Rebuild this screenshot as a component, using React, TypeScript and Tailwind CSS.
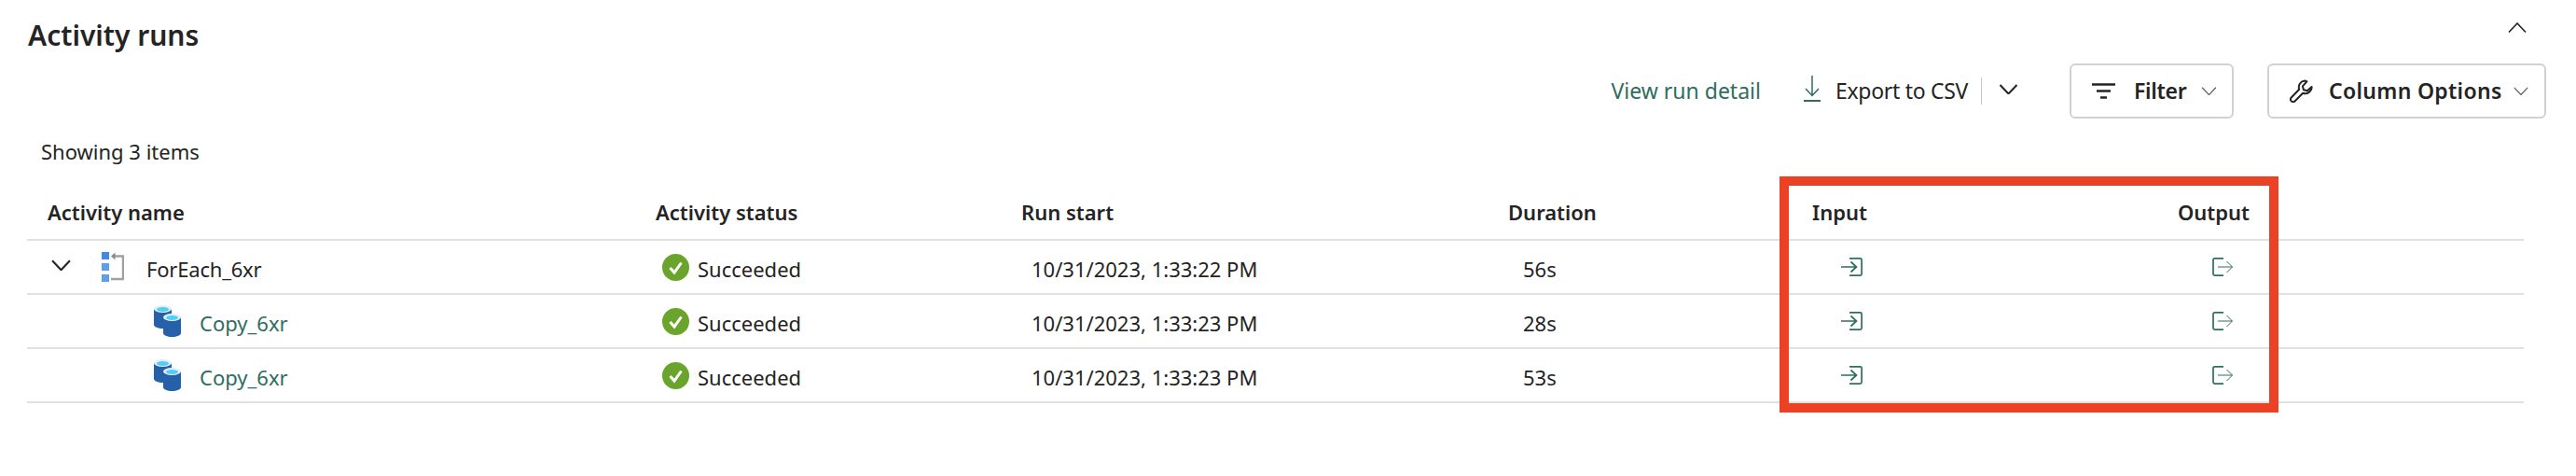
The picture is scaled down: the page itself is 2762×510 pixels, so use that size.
import React from 'react';

const rows = [
  { name: 'ForEach_6xr', start: '10/31/2023, 1:33:22 PM', duration: '56s', parent: true },
  { name: 'Copy_6xr', start: '10/31/2023, 1:33:23 PM', duration: '28s', parent: false },
  { name: 'Copy_6xr', start: '10/31/2023, 1:33:23 PM', duration: '53s', parent: false },
];

const gridCols = 'grid grid-cols-[674px_392px_522px_326px_392px_1fr]';

function Chevron({ className, up, weight = 1.6 }: { className: string; up?: boolean; weight?: number }) {
  return (
    <svg viewBox="0 0 20 11" fill="none" stroke="currentColor" strokeWidth={weight} className={className}>
      <path d={up ? 'M1 10.5 10 1l9 9.5' : 'M1 1l9 9.5L19 1'} />
    </svg>
  );
}

function CheckIcon() {
  return (
    <svg viewBox="0 0 29 29" className="w-[29px] h-[29px] shrink-0">
      <circle cx="14.5" cy="14.5" r="14.5" fill="#6ba42c" />
      <path d="M8.5 15l4.5 5 7.5-10.5" fill="none" stroke="#fff" strokeWidth="3" />
    </svg>
  );
}

function ForEachIcon() {
  return (
    <svg viewBox="0 0 24 32" className="w-[24px] h-[32px] shrink-0">
      <rect x="0" y="0" width="8" height="8" fill="#3f8ae0" />
      <rect x="0" y="12" width="8" height="8" fill="#5ea0e6" />
      <rect x="0" y="24" width="8" height="8" fill="#5ea0e6" />
      <path d="M13 4.5h10V29H10" fill="none" stroke="#a0a0a0" strokeWidth="2.4" />
      <path d="M10 4.5l4.5-4v8z" fill="#8a8a8a" />
    </svg>
  );
}

function Cylinder({ x, y }: { x: number; y: number }) {
  return (
    <g transform={`translate(${x} ${y})`}>
      <path d="M0 4v17c0 2.2 4.400 4 9.500 4s9.500-1.800 9.500-4V4z" fill="#2560a8" />
      <ellipse cx="9.500" cy="4" rx="9.500" ry="4" fill="#e6eef5" />
      <ellipse cx="9.500" cy="4.500" rx="6.500" ry="2.500" fill="#4fd0f2" />
    </g>
  );
}

function CopyIcon() {
  return (
    <svg viewBox="0 0 29 34" className="w-[29px] h-[34px] shrink-0">
      <Cylinder x={0} y={0} />
      <Cylinder x={10} y={9} />
    </svg>
  );
}

function InputIcon() {
  return (
    <svg viewBox="0 0 23 20" fill="none" stroke="#2f6d5e" className="w-[23px] h-[20px]">
      <path d="M9 .9h11.500a1.600 1.600 0 0 1 1.600 1.600v15a1.600 1.600 0 0 1-1.600 1.600H9" strokeWidth="1.700" />
      <path d="M0 10h16M10.500 4.500 16.500 10l-6 5.500" strokeWidth="1.700" />
    </svg>
  );
}

function OutputIcon() {
  return (
    <svg viewBox="0 0 22 20" fill="none" stroke="#2f6d5e" className="w-[22px] h-[20px]">
      <path d="M12 .9H2.600A1.600 1.600 0 0 0 1 2.500v15a1.600 1.600 0 0 0 1.600 1.600H12" strokeWidth="1.700" />
      <path d="M6 10h15.500M15.500 4l6 6-6 6" strokeWidth="1" />
    </svg>
  );
}

export default function App() {
  return (
    <div
      className="relative w-[2762px] h-[510px] bg-white overflow-hidden text-[#242424] text-[22px] leading-none"
      style={{ fontFamily: '"Noto Sans", "Open Sans", sans-serif' }}
    >
      {/* Title */}
      <div className="flex items-center justify-between h-[52px] mt-[12px] pl-[30px] pr-[53px]">
        <h2 className="text-[30px] font-semibold">Activity runs</h2>
        <Chevron up className="w-[20px] h-[11px] -mt-[18px]" />
      </div>

      {/* Toolbar */}
      <div className="flex items-center justify-end h-[59px] mt-[4px] pr-[32px] text-[23px]">
        <span className="text-[#2f6d5e]">View run detail</span>
        <svg viewBox="0 0 18 28" fill="none" stroke="#2f6d5e" strokeWidth="1.500" className="w-[18px] h-[28px] ml-[46px] -mt-[5px]">
          <path d="M9 0v21M2 14l7 7.500 7-7.500" />
          <path d="M0 27h18" strokeWidth="2" />
        </svg>
        <span className="ml-[16px] -tracking-[0.3px]">Export to CSV</span>
        <div className="w-px h-[29px] bg-[#c8c8c8] ml-[14px]" />
        <Chevron className="w-[21px] h-[11px] ml-[18px] -mt-[4px]" weight={2} />
        <button className="flex items-center w-[176px] h-[59px] ml-[55px] pl-[22px] border-2 border-[#d1d1d1] rounded-[6px] font-semibold">
          <svg viewBox="0 0 25 17" stroke="#242424" strokeWidth="2.400" className="w-[25px] h-[17px]">
            <path d="M0 1.500h25M5 8.500h15M9 15.500h7" />
          </svg>
          <span className="ml-[20px] -tracking-[0.3px]">Filter</span>
          <Chevron className="w-[17px] h-[9px] ml-[16px] text-[#616161]" />
        </button>
        <button className="flex items-center w-[299px] h-[59px] ml-[36px] pl-[22px] border-2 border-[#d1d1d1] rounded-[6px] font-semibold">
          <svg viewBox="0 0 25 25" fill="none" stroke="#242424" strokeWidth="2" className="w-[25px] h-[25px]">
            <path d="M16 1.500a7 7 0 0 0-5.800 9.300L1.800 19.500a2.700 2.700 0 0 0 3.900 3.800l8.500-8.500A7 7 0 0 0 23.600 8l-4.700 4.300-4-1-1-4 4.500-5a7 7 0 0 0-2.400-.800z" strokeLinejoin="round" />
          </svg>
          <span className="ml-[17px] tracking-[0.3px]">Column Options</span>
          <Chevron className="w-[16px] h-[9px] ml-[12px] text-[#616161]" />
        </button>
      </div>

      <p className="mt-[24px] pl-[44px]">Showing 3 items</p>

      {/* Table */}
      <div className="ml-[29px] w-[2677px] mt-[27px]">
        <div className={`${gridCols} items-center h-[58px] pb-[2px] border-b-2 border-[#e0e0e0] font-semibold`}>
          <div className="pl-[22px]">Activity name</div>
          <div>Activity status</div>
          <div>Run start</div>
          <div>Duration</div>
          <div>Input</div>
          <div>Output</div>
        </div>
        {rows.map((row, i) => (
          <div key={i} className={`${gridCols} items-center h-[58px] border-b-2 border-[#e0e0e0]`}>
            {row.parent ? (
              <div className="flex items-center">
                <Chevron className="w-[21px] h-[12px] ml-[26px] -mt-[4px]" weight={2} />
                <div className="ml-[33px]"><ForEachIcon /></div>
                <span className="ml-[24px] pt-[3px] -tracking-[0.2px]">{row.name}</span>
              </div>
            ) : (
              <div className="flex items-center pl-[136px]">
                <CopyIcon />
                <span className="ml-[20px] pt-[3px] text-[#2f6d5e]">{row.name}</span>
              </div>
            )}
            <div className="flex items-center pl-[7px]">
              <CheckIcon />
              <span className="ml-[9px] pt-[3px]">Succeeded</span>
            </div>
            <div className="pl-[11px] pt-[3px]">{row.start}</div>
            <div className="pl-[16px] pt-[3px]">{row.duration}</div>
            <div className="pl-[31px]"><InputIcon /></div>
            <div className="pl-[37px]"><OutputIcon /></div>
          </div>
        ))}
      </div>

      {/* Red annotation box */}
      <div className="absolute left-[1908px] top-[189px] w-[535px] h-[253px] border-[10px] border-[#ec4125]" />
    </div>
  );
}
